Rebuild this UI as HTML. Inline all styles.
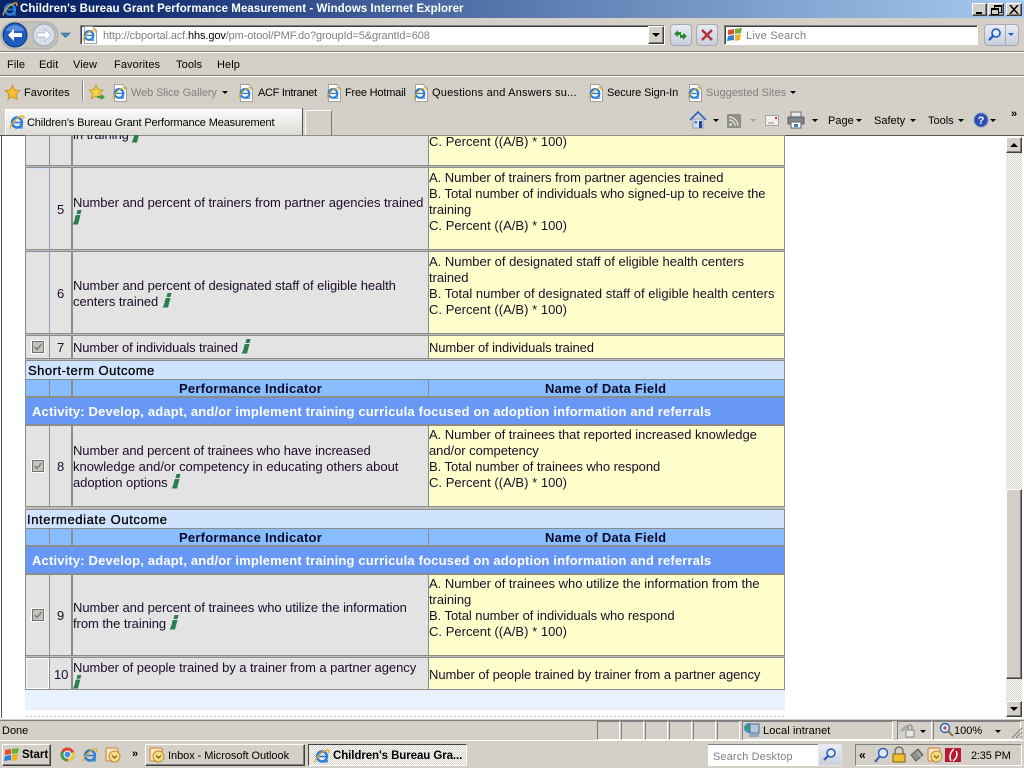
<!DOCTYPE html>
<html><head><meta charset="utf-8"><title>Children's Bureau Grant Performance Measurement</title>
<style>
html,body{margin:0;padding:0;width:1024px;height:768px;overflow:hidden;background:#d4d0c8;font-family:"Liberation Sans",Arial,sans-serif}
.a,.t,svg.a{position:absolute}
.t{white-space:nowrap;line-height:16px;font-size:12px;color:#000}
.g{color:#808080}
.c .t{font-size:13px;letter-spacing:-.05px;color:#1c0c28;margin-top:1px}
.c .b{font-weight:bold;letter-spacing:.24px;color:#0a0a28}
.c .w{font-weight:bold;color:#fff;letter-spacing:.165px}
.c .p{letter-spacing:.03px}
.gr{background:#e3e3e3}.ye{background:#ffffcc}.hd{background:#88bdff}.sec{background:#cfe3ff}.ac{background:#6898f5}
.tri{position:absolute;width:0;height:0;border-left:3px solid transparent;border-right:3px solid transparent;border-top:3px solid #000}
.sunk{position:absolute;box-sizing:border-box;border:1px solid;border-color:#808080 #fff #fff #808080;box-shadow:inset 1px 1px 0 #404040}
.rai{position:absolute;box-sizing:border-box;background:#d4d0c8;border:1px solid;border-color:#fff #404040 #404040 #fff;box-shadow:inset -1px -1px 0 #808080}
.pn{position:absolute;top:721px;height:19px;box-sizing:border-box;border:1px solid;border-color:#808080 #fff #fff #808080}
.cb{position:absolute;width:12px;height:12px;box-sizing:border-box;background:#c8c4bc;border:1px solid #707070;box-shadow:0 0 0 1px #fff}
.sp{position:absolute;left:25px;width:760px;height:1px;background:#bcbcb8}
</style></head><body>
<svg width="0" height="0" style="position:absolute"><defs>
<symbol id="ie" viewBox="0 0 16 16"><circle cx="8" cy="8.500" r="5" fill="none" stroke="#2b7fd6" stroke-width="2.400"/><path d="M4 8.500h8.500" stroke="#2b7fd6" stroke-width="1.600"/><path d="M10 14h4M12 12l2 1" stroke="#2b7fd6" stroke-width="1"/><path d="M1.500 14.500C.5 12 6 4 13 2c2-.5 2.500 1 1.500 3" fill="none" stroke="#e8a820" stroke-width="1.300"/></symbol>
<symbol id="pg" viewBox="0 0 16 18"><path d="M2.500.5h8l4 4v13h-12z" fill="#fff" stroke="#a0a0a0"/><use href="#ie" x="0" y="2" width="14" height="14"/></symbol>
<symbol id="i" viewBox="0 0 10 16"><path d="M5.500 1h4l-1 4H4.500zM4 6h4.500L6 15.500H.5l1.200-2L3.200 8.500H2.700z" fill="#2a7d4f"/></symbol>
<symbol id="ol" viewBox="0 0 16 16"><rect x="1" y="1" width="12" height="13" rx="1.500" fill="#f8e4c0" stroke="#d08030"/><circle cx="9.500" cy="9.500" r="5.500" fill="#f8dc80" stroke="#b89040"/><path d="M7 8.500l2.500 2.500 2.500-2.500" fill="none" stroke="#806020" stroke-width="1.300"/></symbol>
</defs></svg>

<!-- title bar -->
<div class="a" style="left:0;top:0;width:1024px;height:18px;background:linear-gradient(90deg,#0a246a 0%,#0a246a 8%,#5878ad 50%,#a6caf0 100%)"></div>
<svg class="a" style="left:2px;top:1px" width="16" height="16"><use href="#ie"/></svg>
<div class="t" style="left:20px;top:1px;font-weight:bold;font-size:11.500px;color:#fff;letter-spacing:.06px">Children's Bureau Grant Performance Measurement - Windows Internet Explorer</div>
<div class="rai" style="left:972px;top:3px;width:15px;height:13px"><div class="a" style="left:3px;top:8px;width:6px;height:2px;background:#000"></div></div>
<div class="rai" style="left:988px;top:3px;width:16px;height:13px"><div class="a" style="left:5px;top:1px;width:6px;height:5px;border:1px solid #000;border-top-width:2px"></div><div class="a" style="left:2px;top:4px;width:6px;height:4px;border:1px solid #000;border-top-width:2px;background:#d4d0c8"></div></div>
<div class="rai" style="left:1006px;top:3px;width:16px;height:13px"><svg class="a" style="left:2px;top:1px" width="10" height="9"><path d="M1 0l8 9M9 0L1 9" stroke="#000" stroke-width="1.500"/></svg></div>

<!-- address row -->
<svg class="a" style="left:0;top:19px" width="76" height="32">
<rect x="1" y="3" width="57" height="27" rx="13" fill="#c4c2bc" stroke="#a8a8a4"/>
<circle cx="15" cy="16" r="12" fill="#1f5cc0" stroke="#0e3480"/><path d="M15 6a10 7 0 0 1 9 6H6a10 7 0 0 1 9-6z" fill="#6fa0e8" opacity=".7"/>
<path d="M8 16l6-6v4h8v4h-8v4z" fill="#fff"/>
<circle cx="44" cy="16" r="11" fill="#d6deea" stroke="#9ca4b4"/><path d="M51 16l-6-6v4h-8v4h8v4z" fill="#fff" stroke="#a8b0c0" stroke-width=".7"/>
<path d="M61 14h9l-4.500 4.500z" fill="#3f8fc8" stroke="#205a90" stroke-width=".6"/></svg>
<div class="sunk" style="left:80px;top:25px;width:585px;height:20px;background:#fff"></div>
<svg class="a" style="left:82px;top:26px" width="16" height="18"><use href="#pg"/></svg>
<div class="t g" style="left:103px;top:28px;font-size:11px;letter-spacing:-.12px">http://cbportal.acf.<span style="color:#000">hhs.gov</span>/pm-otool/PMF.do?groupId=5&amp;grantId=608</div>
<div class="rai" style="left:648px;top:26px;width:16px;height:18px"><div class="tri" style="left:3px;top:6px;border-left-width:4px;border-right-width:4px;border-top-width:4px"></div></div>
<div class="a" style="left:670px;top:24px;width:20px;height:20px;border:1px solid #a8a8b0;border-radius:4px;background:linear-gradient(#e8ecf4,#c8cedc)"></div>
<svg class="a" style="left:672px;top:27px" width="18" height="16"><path d="M2 7l4-4v2h3v3H6v2zM15 9l-4 4v-2H8V8h3V6z" fill="#2a8a30"/></svg>
<div class="a" style="left:696px;top:24px;width:20px;height:20px;border:1px solid #a8a8b0;border-radius:4px;background:linear-gradient(#e8ecf4,#c8cedc)"></div>
<svg class="a" style="left:700px;top:28px" width="14" height="14"><path d="M2 2l10 10M12 2L2 12" stroke="#b03038" stroke-width="2.400"/></svg>
<div class="sunk" style="left:724px;top:25px;width:254px;height:20px;background:#fff"></div>
<svg class="a" style="left:727px;top:27px" width="16" height="16"><path d="M1 3l6-1v5l-6 1z" fill="#e0502a"/><path d="M8 2l7-1-1 5-6 1z" fill="#6cb030"/><path d="M1 9l6-1v5l-7 1z" fill="#2a80d8"/><path d="M8 8l6-1-1 6-5 1z" fill="#f0b020"/></svg>
<div class="t g" style="left:746px;top:28px;font-size:11px;letter-spacing:.2px">Live Search</div>
<div class="a" style="left:984px;top:24px;width:20px;height:20px;border:1px solid #a8a8b0;border-radius:4px 0 0 4px;background:linear-gradient(#e8ecf4,#c8cedc)"></div>
<div class="a" style="left:1005px;top:24px;width:12px;height:20px;border:1px solid #a8a8b0;border-radius:0 4px 4px 0;background:linear-gradient(#e8ecf4,#c8cedc)"></div>
<svg class="a" style="left:987px;top:27px" width="16" height="16"><circle cx="9" cy="6" r="4" fill="#dfeaff" stroke="#1858c8" stroke-width="1.600"/><path d="M6 9l-4 4" stroke="#1858c8" stroke-width="2.200"/></svg>
<div class="tri" style="left:1008px;top:33px;border-top-color:#1858c8"></div>

<div class="a" style="left:0;top:51px;width:1024px;height:1px;background:#808080"></div>
<div class="a" style="left:0;top:52px;width:1024px;height:1px;background:#fff"></div>

<!-- menu -->
<div class="t" style="left:7px;top:57px;font-size:11px;letter-spacing:.1px">File</div>
<div class="t" style="left:39px;top:57px;font-size:11px;letter-spacing:.1px">Edit</div>
<div class="t" style="left:73px;top:57px;font-size:11px;letter-spacing:.1px">View</div>
<div class="t" style="left:114px;top:57px;font-size:11px;letter-spacing:.1px">Favorites</div>
<div class="t" style="left:176px;top:57px;font-size:11px;letter-spacing:.1px">Tools</div>
<div class="t" style="left:217px;top:57px;font-size:11px;letter-spacing:.1px">Help</div>
<div class="a" style="left:0;top:75px;width:1024px;height:1px;background:#808080"></div>
<div class="a" style="left:0;top:76px;width:1024px;height:1px;background:#fff"></div>

<!-- favorites -->
<svg class="a" style="left:4px;top:84px" width="17" height="17"><path d="M8.500 1l2.300 5 5.200.6-3.900 3.500 1.100 5.400-4.700-2.700-4.700 2.700 1.100-5.400L1 6.600 6.200 6z" fill="#f8c030" stroke="#c88820" stroke-width=".8"/></svg>
<div class="t" style="left:24px;top:85px;font-size:11px;letter-spacing:.05px">Favorites</div>
<div class="a" style="left:82px;top:81px;width:1px;height:20px;background:#808080"></div>
<div class="a" style="left:83px;top:81px;width:1px;height:20px;background:#fff"></div>
<svg class="a" style="left:88px;top:84px" width="18" height="17"><path d="M8 1l2.200 4.600 4.800.6-3.500 3.300 1 5-4.500-2.500-4.500 2.500 1-5L1 6.200l4.800-.6z" fill="#f8d040" stroke="#c09020" stroke-width=".8"/><path d="M9 12h4v-2l4 3-4 3v-2H9z" fill="#40a040"/></svg>
<svg class="a" style="left:112px;top:84px" width="16" height="18"><use href="#pg"/></svg>
<div class="t g" style="left:131px;top:85px;font-size:11px;letter-spacing:-.08px">Web Slice Gallery</div><div class="tri" style="left:222px;top:91px"></div>
<svg class="a" style="left:238px;top:84px" width="16" height="18"><use href="#pg"/></svg>
<div class="t" style="left:258px;top:85px;font-size:11px;letter-spacing:-.3px">ACF Intranet</div>
<svg class="a" style="left:326px;top:84px" width="16" height="18"><use href="#pg"/></svg>
<div class="t" style="left:345px;top:85px;font-size:11px;letter-spacing:-.2px">Free Hotmail</div>
<svg class="a" style="left:413px;top:84px" width="16" height="18"><use href="#pg"/></svg>
<div class="t" style="left:432px;top:85px;font-size:11px;letter-spacing:.2px">Questions and Answers su...</div>
<svg class="a" style="left:588px;top:84px" width="16" height="18"><use href="#pg"/></svg>
<div class="t" style="left:607px;top:85px;font-size:11px;letter-spacing:-.12px">Secure Sign-In</div>
<svg class="a" style="left:687px;top:84px" width="16" height="18"><use href="#pg"/></svg>
<div class="t g" style="left:706px;top:85px;font-size:11px;letter-spacing:0">Suggested Sites</div><div class="tri" style="left:790px;top:91px"></div>

<!-- tabs -->
<div class="a" style="left:5px;top:109px;width:297px;height:26px;box-sizing:border-box;border-top:1px solid #fff;background:linear-gradient(#fafafa,#dcdad4);border-left:1px solid #fff"></div>
<div class="a" style="left:302px;top:108px;width:1px;height:27px;background:#555"></div>
<svg class="a" style="left:9px;top:114px" width="16" height="16"><use href="#ie"/></svg>
<div class="t" style="left:27px;top:115px;font-size:11px;letter-spacing:-.14px">Children's Bureau Grant Performance Measurement</div>
<div class="a" style="left:305px;top:110px;width:27px;height:25px;box-sizing:border-box;border:1px solid #fff;border-bottom:0;border-right:1px solid #777"></div>

<!-- command bar -->
<svg class="a" style="left:689px;top:111px" width="18" height="18"><path d="M1 9l8-8 8 8" fill="none" stroke="#3060c0" stroke-width="1.600"/><path d="M4 8h10v9H4z" fill="#d8e0ec" stroke="#8090a8" stroke-width=".7"/><path d="M10 10h3v7h-3z" fill="#1848a0"/><path d="M5.500 10h2.500v2.500H5.500z" fill="#5080c0"/></svg>
<div class="tri" style="left:713px;top:119px"></div>
<div class="a" style="left:727px;top:114px;width:14px;height:14px;background:#8e8e88;border-radius:1px;border:0"></div>
<svg class="a" style="left:727px;top:114px" width="14" height="14"><circle cx="3.500" cy="10.500" r="1.500" fill="#d8d8d4"/><path d="M2 6a6 6 0 0 1 6 6M2 3a9 9 0 0 1 9 9" fill="none" stroke="#d8d8d4" stroke-width="1.500"/></svg>
<div class="tri" style="left:750px;top:119px;border-top-color:#a0a0a0"></div>
<svg class="a" style="left:765px;top:115px" width="14" height="11"><rect x=".5" y=".5" width="13" height="10" fill="#f0f0ee" stroke="#a0a0a0"/><rect x="10" y="2" width="2" height="2" fill="#d03030"/><path d="M3 8h6" stroke="#909090"/></svg>
<svg class="a" style="left:787px;top:111px" width="18" height="18"><rect x="4" y="1" width="10" height="6" fill="#e8e8e8" stroke="#707070"/><rect x="1" y="6" width="16" height="7" rx="1" fill="#808890" stroke="#505860"/><rect x="4" y="11" width="10" height="6" fill="#fff" stroke="#606060"/><rect x="7" y="13" width="4" height="3" fill="#3080c0"/></svg>
<div class="tri" style="left:812px;top:119px"></div>
<div class="t" style="left:828px;top:113px;font-size:11px">Page</div><div class="tri" style="left:856px;top:119px"></div>
<div class="t" style="left:874px;top:113px;font-size:11px">Safety</div><div class="tri" style="left:910px;top:119px"></div>
<div class="t" style="left:928px;top:113px;font-size:11px">Tools</div><div class="tri" style="left:958px;top:119px"></div>
<svg class="a" style="left:973px;top:112px" width="16" height="16"><circle cx="8" cy="8" r="7" fill="#2a50b8" stroke="#8090b8"/><text x="8" y="12" text-anchor="middle" font-family="Liberation Sans" font-weight="bold" font-size="11" fill="#fff">?</text></svg>
<div class="tri" style="left:990px;top:119px"></div>
<div class="t" style="left:1011px;top:106px;font-size:11px;font-weight:bold">»</div>

<!-- content -->
<div class="a c" style="left:0;top:135px;width:1024px;height:583px;background:#fff;overflow:hidden">
<div class="a" style="left:0;top:0;width:1024px;height:1px;background:#555"></div>
<div class="a" style="left:1px;top:0;width:1px;height:583px;background:#555"></div>
<div class="a" style="left:25px;top:0;width:760px;height:575px;background:#8c8c88"></div>
<div class="a" style="left:25px;top:555px;width:760px;height:20px;background:#e9f1fc"></div>
<div class="a" style="left:26px;top:581px;width:760px;height:1px;background:repeating-linear-gradient(90deg,#c8d4ea 0 2px,#fff 2px 4px)"></div>
<div style="position:absolute;left:0;top:-135px;width:1024px;height:768px">
<div class="sp" style="top:166px"></div><div class="sp" style="top:250px"></div><div class="sp" style="top:334px"></div><div class="sp" style="top:359px"></div><div class="sp" style="top:507px"></div><div class="sp" style="top:508px"></div><div class="sp" style="top:656px"></div>
<!-- row 4 -->
<div class="a gr" style="left:26px;top:136px;width:23px;height:29px"></div><div class="a gr" style="left:50px;top:136px;width:21px;height:29px"></div><div class="a gr" style="left:73px;top:136px;width:355px;height:29px"></div><div class="a ye" style="left:429px;top:136px;width:355px;height:29px"></div>
<div class="t" style="left:73px;top:126px">in training</div>
<div class="t p" style="left:429px;top:133px">C. Percent ((A/B) * 100)</div>
<svg class="a" style="left:131px;top:127px" width="10" height="16"><use href="#i"/></svg>
<!-- row 5 -->
<div class="a gr" style="left:26px;top:168px;width:23px;height:81px;box-shadow:inset 1px 1px 0 #d0e0f8"></div><div class="a" style="left:49px;top:168px;width:1px;height:165px;background:#90a0c0"></div><div class="a gr" style="left:50px;top:168px;width:21px;height:81px"></div><div class="a gr" style="left:73px;top:168px;width:355px;height:81px"></div><div class="a ye" style="left:429px;top:168px;width:355px;height:81px"></div>
<div class="t" style="left:57px;top:201px">5</div>
<div class="t" style="left:73px;top:194px">Number and percent of trainers from partner agencies trained</div>
<svg class="a" style="left:72px;top:209px" width="10" height="16"><use href="#i"/></svg>
<div class="t" style="left:429px;top:169px">A. Number of trainers from partner agencies trained</div>
<div class="t" style="left:429px;top:185px">B. Total number of individuals who signed-up to receive the</div>
<div class="t" style="left:429px;top:201px">training</div>
<div class="t p" style="left:429px;top:217px">C. Percent ((A/B) * 100)</div>
<!-- row 6 -->
<div class="a gr" style="left:26px;top:252px;width:23px;height:81px;box-shadow:inset 1px 1px 0 #d0e0f8"></div><div class="a gr" style="left:50px;top:252px;width:21px;height:81px"></div><div class="a gr" style="left:73px;top:252px;width:355px;height:81px"></div><div class="a ye" style="left:429px;top:252px;width:355px;height:81px"></div>
<div class="t" style="left:57px;top:285px">6</div>
<div class="t" style="left:73px;top:277px">Number and percent of designated staff of eligible health</div>
<div class="t" style="left:73px;top:293px">centers trained</div>
<svg class="a" style="left:162px;top:292px" width="10" height="16"><use href="#i"/></svg>
<div class="t" style="left:429px;top:253px;letter-spacing:-.01px">A. Number of designated staff of eligible health centers</div>
<div class="t" style="left:429px;top:269px">trained</div>
<div class="t" style="left:429px;top:285px;letter-spacing:.02px">B. Total number of designated staff of eligible health centers</div>
<div class="t p" style="left:429px;top:301px">C. Percent ((A/B) * 100)</div>
<!-- row 7 -->
<div class="a gr" style="left:26px;top:336px;width:23px;height:22px"></div><div class="a gr" style="left:50px;top:336px;width:21px;height:22px"></div><div class="a gr" style="left:73px;top:336px;width:355px;height:22px"></div><div class="a ye" style="left:429px;top:336px;width:355px;height:22px"></div>
<div class="cb" style="left:32px;top:341px"></div><svg class="a" style="left:33px;top:342px" width="10" height="10"><path d="M1.500 5l2.500 2.500L8.500 2" fill="none" stroke="#808080" stroke-width="1.600"/></svg>
<div class="t" style="left:57px;top:339px">7</div>
<div class="t" style="left:73px;top:339px;letter-spacing:-.12px">Number of individuals trained</div>
<svg class="a" style="left:241px;top:338px" width="10" height="16"><use href="#i"/></svg>
<div class="t" style="left:429px;top:339px;letter-spacing:-.12px">Number of individuals trained</div>
<!-- short term -->
<div class="a sec" style="left:26px;top:361px;width:758px;height:18px"></div>
<div class="t" style="left:28px;top:362px;color:#000;letter-spacing:.5px;-webkit-text-stroke:.3px #000">Short-term Outcome</div>
<div class="a hd" style="left:26px;top:380px;width:23px;height:16px"></div><div class="a hd" style="left:50px;top:380px;width:21px;height:16px"></div><div class="a hd" style="left:73px;top:380px;width:355px;height:16px"></div><div class="a hd" style="left:429px;top:380px;width:355px;height:16px"></div>
<div class="t b" style="left:179px;top:380px">Performance Indicator</div>
<div class="t b" style="left:545px;top:380px">Name of Data Field</div>
<div class="a ac" style="left:26px;top:398px;width:758px;height:26px"></div>
<div class="t w" style="left:32px;top:403px">Activity: Develop, adapt, and/or implement training curricula focused on adoption information and referrals</div>
<!-- row 8 -->
<div class="a gr" style="left:26px;top:426px;width:23px;height:80px"></div><div class="a gr" style="left:50px;top:426px;width:21px;height:80px"></div><div class="a gr" style="left:73px;top:426px;width:355px;height:80px"></div><div class="a ye" style="left:429px;top:426px;width:355px;height:80px"></div>
<div class="cb" style="left:32px;top:460px"></div><svg class="a" style="left:33px;top:461px" width="10" height="10"><path d="M1.500 5l2.500 2.500L8.500 2" fill="none" stroke="#808080" stroke-width="1.600"/></svg>
<div class="t" style="left:57px;top:458px">8</div>
<div class="t" style="left:73px;top:442px;letter-spacing:-.09px">Number and percent of trainees who have increased</div>
<div class="t" style="left:73px;top:458px;letter-spacing:-.01px">knowledge and/or competency in educating others about</div>
<div class="t" style="left:73px;top:474px">adoption options</div>
<svg class="a" style="left:171px;top:473px" width="10" height="16"><use href="#i"/></svg>
<div class="t" style="left:429px;top:426px;letter-spacing:-.03px">A. Number of trainees that reported increased knowledge</div>
<div class="t" style="left:429px;top:442px">and/or competency</div>
<div class="t" style="left:429px;top:458px">B. Total number of trainees who respond</div>
<div class="t p" style="left:429px;top:474px">C. Percent ((A/B) * 100)</div>
<!-- intermediate -->
<div class="a sec" style="left:26px;top:510px;width:758px;height:18px"></div>
<div class="t" style="left:27px;top:511px;color:#000;letter-spacing:.6px;-webkit-text-stroke:.3px #000">Intermediate Outcome</div>
<div class="a hd" style="left:26px;top:529px;width:23px;height:16px"></div><div class="a hd" style="left:50px;top:529px;width:21px;height:16px"></div><div class="a hd" style="left:73px;top:529px;width:355px;height:16px"></div><div class="a hd" style="left:429px;top:529px;width:355px;height:16px"></div>
<div class="t b" style="left:179px;top:529px">Performance Indicator</div>
<div class="t b" style="left:545px;top:529px">Name of Data Field</div>
<div class="a ac" style="left:26px;top:547px;width:758px;height:26px"></div>
<div class="t w" style="left:32px;top:552px">Activity: Develop, adapt, and/or implement training curricula focused on adoption information and referrals</div>
<!-- row 9 -->
<div class="a gr" style="left:26px;top:575px;width:23px;height:80px"></div><div class="a gr" style="left:50px;top:575px;width:21px;height:80px"></div><div class="a gr" style="left:73px;top:575px;width:355px;height:80px"></div><div class="a ye" style="left:429px;top:575px;width:355px;height:80px"></div>
<div class="cb" style="left:32px;top:609px"></div><svg class="a" style="left:33px;top:610px" width="10" height="10"><path d="M1.500 5l2.500 2.500L8.500 2" fill="none" stroke="#808080" stroke-width="1.600"/></svg>
<div class="t" style="left:57px;top:607px">9</div>
<div class="t" style="left:73px;top:599px">Number and percent of trainees who utilize the information</div>
<div class="t" style="left:73px;top:615px">from the training</div>
<svg class="a" style="left:169px;top:614px" width="10" height="16"><use href="#i"/></svg>
<div class="t" style="left:429px;top:575px;letter-spacing:-.02px">A. Number of trainees who utilize the information from the</div>
<div class="t" style="left:429px;top:591px">training</div>
<div class="t" style="left:429px;top:607px">B. Total number of individuals who respond</div>
<div class="t p" style="left:429px;top:623px">C. Percent ((A/B) * 100)</div>
<!-- row 10 -->
<div class="a gr" style="left:26px;top:658px;width:23px;height:31px;box-shadow:inset 1px 1px 0 #fff,inset -1px -1px 0 #fff"></div><div class="a gr" style="left:50px;top:658px;width:21px;height:31px"></div><div class="a gr" style="left:73px;top:658px;width:355px;height:31px"></div><div class="a ye" style="left:429px;top:658px;width:355px;height:31px"></div>
<div class="t" style="left:54px;top:666px">10</div>
<div class="t" style="left:73px;top:659px">Number of people trained by a trainer from a partner agency</div>
<svg class="a" style="left:72px;top:674px" width="10" height="15"><use href="#i"/></svg>
<div class="t" style="left:429px;top:666px;letter-spacing:-.07px">Number of people trained by trainer from a partner agency</div>
</div>
<!-- scrollbar -->
<div class="a" style="left:1006px;top:2px;width:16px;height:580px;background:repeating-conic-gradient(#d4d0c8 0 25%,#fff 0 50%) 0 0/2px 2px"></div>
<div class="rai" style="left:1006px;top:2px;width:16px;height:16px"><div class="tri" style="left:3px;top:5px;border-left-width:4px;border-right-width:4px;border-top:0;border-bottom:4px solid #000"></div></div>
<div class="rai" style="left:1006px;top:354px;width:16px;height:190px"></div>
<div class="rai" style="left:1006px;top:566px;width:16px;height:16px"><div class="tri" style="left:3px;top:5px;border-left-width:4px;border-right-width:4px;border-top-width:4px"></div></div>
</div>
<div class="a" style="left:0;top:718px;width:1024px;height:1px;background:#fff"></div>
<div class="a" style="left:0;top:720px;width:1024px;height:1px;background:#808080"></div>

<!-- status bar -->
<div class="t" style="left:2px;top:723px;font-size:11px">Done</div>
<div class="pn" style="left:597px;width:23px"></div><div class="pn" style="left:621px;width:23px"></div><div class="pn" style="left:645px;width:23px"></div><div class="pn" style="left:669px;width:23px"></div><div class="pn" style="left:693px;width:23px"></div><div class="pn" style="left:717px;width:23px"></div>
<div class="pn" style="left:742px;width:151px"></div>
<svg class="a" style="left:743px;top:722px" width="18" height="17"><circle cx="6" cy="6" r="5" fill="#3090c8"/><path d="M3 3l3 1 1 3-3 1z" fill="#40a040"/><rect x="7" y="2" width="9" height="9" fill="#b0c8e0" stroke="#507090"/><rect x="6" y="12" width="10" height="3" fill="#90a8c0"/></svg>
<div class="t" style="left:763px;top:723px;font-size:11px;letter-spacing:.1px">Local intranet</div>
<div class="pn" style="left:897px;width:35px"></div>
<svg class="a" style="left:899px;top:722px" width="18" height="16"><path d="M1 8l6-5 2 2-6 5z" fill="#a8a8a4"/><rect x="7" y="8" width="8" height="7" fill="#e8e8e4" stroke="#888"/><path d="M9 8V5a2 2 0 0 1 4 0v3" fill="none" stroke="#888" stroke-width="1.300"/></svg>
<div class="tri" style="left:920px;top:730px"></div>
<div class="pn" style="left:933px;width:88px"></div>
<svg class="a" style="left:939px;top:722px" width="16" height="16"><circle cx="6" cy="6" r="4.500" fill="#dfeaff" stroke="#3060b8" stroke-width="1.400"/><path d="M9 9l5 5" stroke="#907040" stroke-width="2"/><path d="M4 6h4M6 4v4" stroke="#c02020"/></svg>
<div class="t" style="left:954px;top:723px;font-size:11px">100%</div>
<div class="tri" style="left:995px;top:730px"></div>
<svg class="a" style="left:1011px;top:727px" width="12" height="12"><path d="M11 1L1 11M11 5l-6 6M11 9l-2 2" stroke="#808080"/></svg>
<div class="a" style="left:0;top:740px;width:1024px;height:1px;background:#fff"></div>

<!-- taskbar -->
<div class="rai" style="left:2px;top:744px;width:49px;height:22px"></div>
<svg class="a" style="left:4px;top:747px" width="16" height="16"><path d="M1 3l6-1v5l-6 1z" fill="#e0502a"/><path d="M8 2l7-1-1 5-6 1z" fill="#6cb030"/><path d="M1 9l6-1v5l-7 1z" fill="#2a80d8"/><path d="M8 8l6-1-1 6-5 1z" fill="#f0b020"/></svg>
<div class="t" style="left:22px;top:747px;font-size:11.500px;font-weight:bold">Start</div>
<svg class="a" style="left:60px;top:747px" width="15" height="15"><circle cx="7.500" cy="7.500" r="7" fill="#e04030"/><path d="M7.500 7.500L14 5a7 7 0 0 1-6 9.500z" fill="#f0c830"/><path d="M7.500 7.500L7 14.500A7 7 0 0 1 1.500 4z" fill="#40a050"/><circle cx="7.500" cy="7.500" r="3.500" fill="#4090e0" stroke="#fff"/></svg>
<svg class="a" style="left:82px;top:747px" width="16" height="16"><use href="#ie"/></svg>
<svg class="a" style="left:105px;top:747px" width="16" height="16"><use href="#ol"/></svg>
<div class="t" style="left:132px;top:746px;font-size:11px;font-weight:bold">»</div>
<div class="rai" style="left:145px;top:744px;width:160px;height:22px"></div>
<svg class="a" style="left:149px;top:747px" width="16" height="16"><use href="#ol"/></svg>
<div class="t" style="left:168px;top:748px;font-size:11px;letter-spacing:-.05px">Inbox - Microsoft Outlook</div>
<div class="a" style="left:308px;top:744px;width:159px;height:22px;box-sizing:border-box;border:1px solid;border-color:#404040 #fff #fff #404040;background:repeating-conic-gradient(#d4d0c8 0 25%,#fff 0 50%) 0 0/2px 2px"></div>
<svg class="a" style="left:314px;top:748px" width="16" height="16"><use href="#ie"/></svg>
<div class="t" style="left:333px;top:748px;font-size:11.500px;font-weight:bold;letter-spacing:-.08px">Children's Bureau Gra...</div>
<div class="a" style="left:708px;top:744px;width:110px;height:22px;background:#fff;border-top:1px solid #808080;box-sizing:border-box"></div>
<div class="t g" style="left:713px;top:749px;font-size:11px;letter-spacing:.1px">Search Desktop</div>
<div class="a" style="left:818px;top:744px;width:24px;height:22px;background:linear-gradient(#e8ecf4,#c8cedc);border:1px solid #e8e8e8;box-sizing:border-box"></div>
<svg class="a" style="left:822px;top:747px" width="16" height="16"><circle cx="9" cy="6" r="4" fill="#dfeaff" stroke="#2858b0" stroke-width="1.500"/><path d="M6 9l-4 4" stroke="#2858b0" stroke-width="2"/></svg>
<div class="a" style="left:855px;top:744px;width:167px;height:22px;box-sizing:border-box;border:1px solid;border-color:#808080 #fff #fff #808080"></div>
<div class="t" style="left:859px;top:747px;font-size:12px;font-weight:bold">«</div>
<svg class="a" style="left:873px;top:747px" width="17" height="17"><circle cx="10" cy="6" r="4.500" fill="#dfeaff" stroke="#3060c0" stroke-width="1.500"/><path d="M7 9l-5 6" stroke="#3060c0" stroke-width="2"/></svg>
<svg class="a" style="left:891px;top:746px" width="16" height="17"><path d="M4 8V5a4 4 0 0 1 8 0v3" fill="none" stroke="#707070" stroke-width="1.500"/><rect x="2" y="8" width="12" height="8" fill="#f0c030" stroke="#806010"/></svg>
<svg class="a" style="left:909px;top:747px" width="16" height="16"><path d="M2 8l7-6 5 6-7 6z" fill="#90908c" stroke="#606060"/><path d="M8 5l4 5" stroke="#d0d0cc"/></svg>
<svg class="a" style="left:927px;top:747px" width="16" height="16"><use href="#ol"/></svg>
<div class="a" style="left:945px;top:748px;width:16px;height:14px;background:#b81830"></div>
<svg class="a" style="left:945px;top:748px" width="16" height="14"><path d="M9 1C5 4 4 9 6 13M11 3c2 3 1 7-3 10" fill="none" stroke="#fff" stroke-width="1.500"/></svg>
<div class="t" style="left:971px;top:748px;font-size:11px;letter-spacing:-.2px">2:35 PM</div>
</body></html>
